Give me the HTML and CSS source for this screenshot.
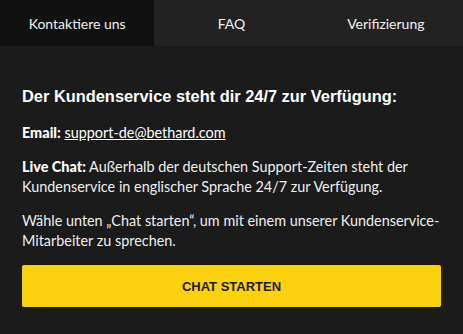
FILE: index.html
```html
<!DOCTYPE html>
<html lang="de">
<head>
<meta charset="utf-8">
<link rel="stylesheet" href="styles.css">
</head>
<body>
<div class="panel">
  <nav class="tabs">
    <div class="tab active">Kontaktiere uns</div>
    <div class="tab">FAQ</div>
    <div class="tab">Verifizierung</div>
  </nav>
  <section class="content">
    <h2 class="title">Der Kundenservice steht dir 24/7 zur Verfügung:</h2>
    <p class="text first"><b>Email:</b> <a class="mail" href="#">support-de@bethard.com</a></p>
    <p class="text"><b>Live Chat:</b> Außerhalb der deutschen Support-Zeiten steht der Kundenservice in englischer Sprache 24/7 zur Verfügung.</p>
    <p class="text">Wähle unten „Chat starten“, um mit einem unserer Kundenservice-Mitarbeiter zu sprechen.</p>
    <button class="chat-btn">CHAT STARTEN</button>
  </section>
</div>
</body>
</html>
```
FILE: styles.css
```css
html, body {
  margin: 0;
  padding: 0;
  background: #1b1b1b;
}
.panel {
  width: 463px;
  height: 334px;
  background: #1b1b1b;
  color: #f2f2f2;
  font-family: "Lato", "Liberation Sans", sans-serif;
}
.tabs {
  display: grid;
  grid-template-columns: 1fr 1fr 1fr;
  height: 46px;
  background: #222222;
}
.tab {
  display: flex;
  align-items: center;
  justify-content: center;
  font-size: 14px;
  color: #f0f0f0;
}
.tab.active {
  background: #111111;
}
.content {
  padding: 0 22px;
  display: flex;
  flex-direction: column;
}
.title {
  margin: 40px 0 0;
  font-family: "Liberation Sans", Arial, sans-serif;
  font-weight: bold;
  font-size: 16.4px;
  line-height: 20px;
  color: #ffffff;
}
.text {
  margin: 14px 0 0;
  font-size: 14.4px;
  line-height: 20px;
  color: #eeeeee;
}
.text.first {
  margin-top: 17px;
}
.text b {
  font-weight: 900;
  color: #ffffff;
}
.mail {
  color: #ffffff;
  text-decoration: underline;
}
.chat-btn {
  margin-top: 14px;
  height: 42px;
  border: none;
  border-radius: 2px;
  background: #fbd10f;
  color: #1b1b1b;
  font-family: "Liberation Sans", Arial, sans-serif;
  font-weight: bold;
  font-size: 13px;
}
```
